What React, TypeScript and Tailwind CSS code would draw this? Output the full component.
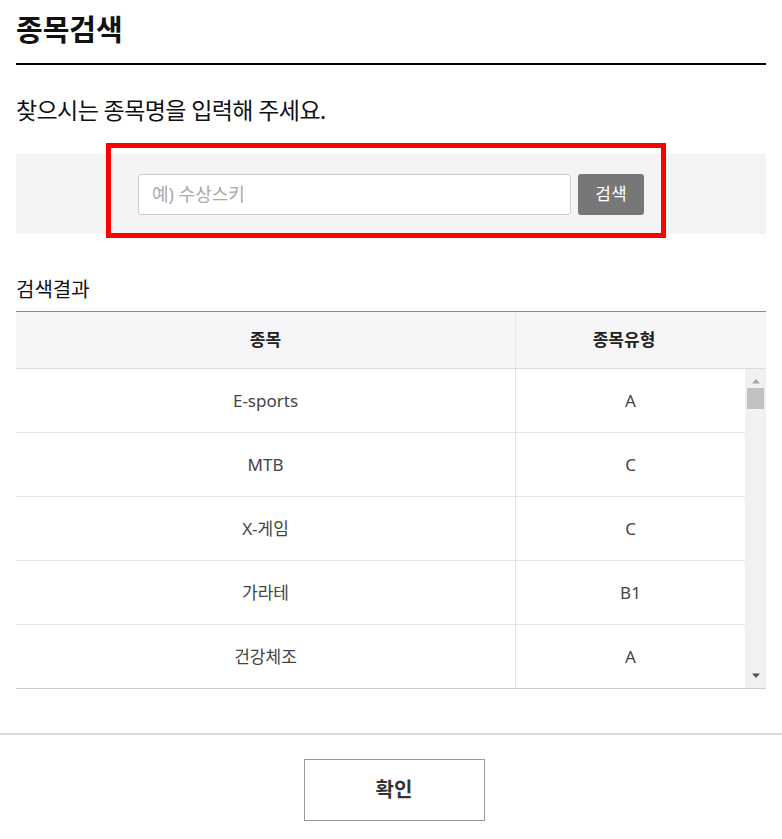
import React from "react";

const rows = [
  { name: "E-sports", type: "A" },
  { name: "MTB", type: "C" },
  { name: "X-게임", type: "C" },
  { name: "가라테", type: "B1" },
  { name: "건강체조", type: "A" },
];

export default function App() {
  return (
    <div
      className="w-[782px] h-[839px] bg-white text-[#222] relative"
      style={{ fontFamily: '"Noto Sans", "Noto Sans CJK KR", sans-serif' }}
    >
      <div className="px-4">
        <div className="h-[65px] border-b-2 border-black flex items-start pt-[10px]">
          <h1 className="text-[29px] font-bold leading-[40px] text-[#111]">종목검색</h1>
        </div>
        <p className="mt-[29px] text-[23px] leading-[32px] tracking-[-0.6px] text-[#111]">
          찾으시는 종목명을 입력해 주세요.
        </p>
        <div className="mt-[28px] h-[80px] bg-[#f4f4f4] relative flex items-center pl-[122px]">
          <div className="w-[433px] h-[41px] bg-white border border-[#cccccc] rounded-[3px] flex items-center px-[13px]">
            <span className="text-[18px] text-[#aaa]">예) 수상스키</span>
          </div>
          <button className="ml-[7px] w-[66px] h-[41px] bg-[#777777] rounded-[3px] text-white text-[17px]">
            검색
          </button>
          <div className="absolute left-[90px] top-[-11px] w-[560px] h-[95px] border-[5px] border-[#ff0000]" />
        </div>
        <p className="mt-[44px] text-[20px] leading-[24px] text-[#111]">검색결과</p>
        <div className="mt-[9px] border-t border-[#888]">
          <div className="h-[57px] bg-[#f6f6f8] border-b border-[#dddddd] flex">
            <div className="w-[500px] border-r border-[#e5e5e5] flex items-center justify-center text-[17px] font-bold text-[#222]">
              종목
            </div>
            <div className="flex-1 pr-[34px] flex items-center justify-center text-[17px] font-bold text-[#222]">
              종목유형
            </div>
          </div>
          <div className="h-[320px] flex border-b border-[#cccccc] overflow-hidden">
            <div className="flex-1">
              {rows.map((r) => (
                <div key={r.name} className="h-[64px] border-b border-[#e5e5e5] last:border-b-0 flex shrink-0">
                  <div className="w-[500px] border-r border-[#e5e5e5] flex items-center justify-center text-[17px] text-[#444]">
                    {r.name}
                  </div>
                  <div className="flex-1 flex items-center justify-center text-[17px] text-[#444]">{r.type}</div>
                </div>
              ))}
            </div>
            <div className="w-[21px] bg-[#f1f1f1] flex flex-col items-center">
              <svg width="10" height="6" viewBox="0 0 10 6" className="mt-[9px]">
                <path d="M1 5.5 L5 1 L9 5.5 Z" fill="#a3a3a3" />
              </svg>
              <div className="mt-[4px] w-[17px] h-[21px] bg-[#c1c1c1]" />
              <div className="flex-1" />
              <svg width="10" height="6" viewBox="0 0 10 6" className="mb-[9px]">
                <path d="M1 0.5 L9 0.5 L5 5 Z" fill="#505050" />
              </svg>
            </div>
          </div>
        </div>
      </div>
      <div className="mt-[44px] border-t-2 border-[#dddddd] flex justify-center pt-[24px] pl-[6px]">
        <button className="w-[181px] h-[62px] border border-[#999] bg-white text-[20px] font-bold text-[#333]">
          확인
        </button>
      </div>
    </div>
  );
}
